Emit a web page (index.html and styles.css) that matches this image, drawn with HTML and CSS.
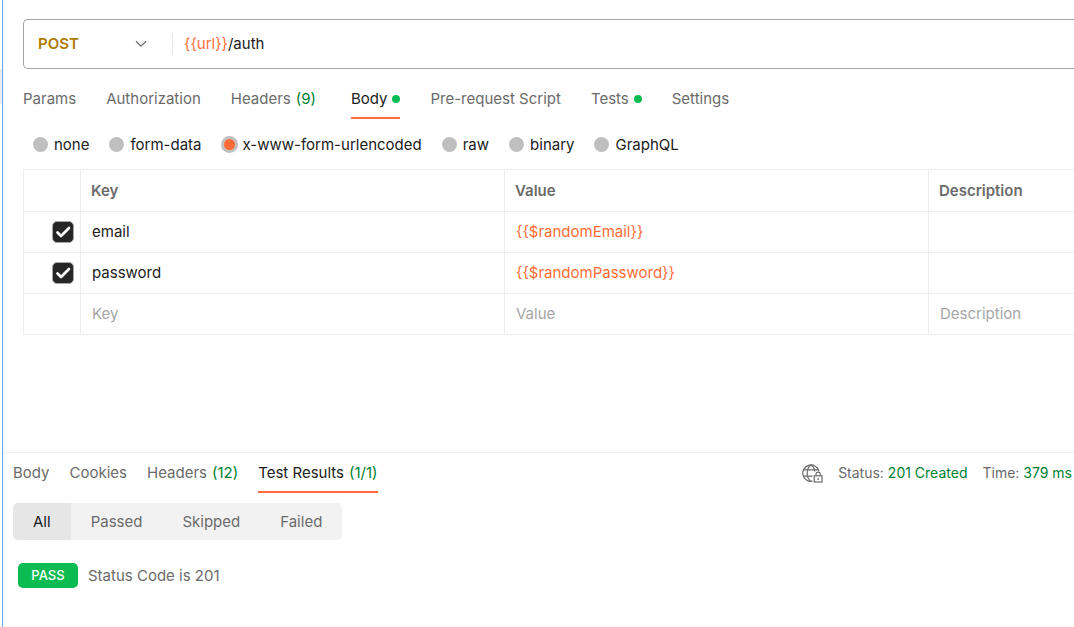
FILE: index.html
```
<!DOCTYPE html>
<html lang="en">
<head>
  <meta charset="UTF-8">
  <meta name="viewport" content="width=device-width, initial-scale=1.0">
  <title>POST {{url}}/auth</title>
  <link rel="stylesheet" href="styles.css">
</head>
<body>
  <div class="gutter"><div class="gutter-mark"></div></div>
  <main class="workspace">
    <section class="request">
      <div class="url-bar">
        <div class="method">
          <select aria-label="Method">
            <option>GET</option>
            <option selected>POST</option>
            <option>PUT</option>
            <option>DELETE</option>
          </select>
          <svg class="chevron" width="12" height="8" viewBox="0 0 12 8"><path d="M1 1.2l5 5 5-5" fill="none" stroke="#6b6b6b" stroke-width="1.3"/></svg>
        </div>
        <div class="url" role="textbox" contenteditable="true" spellcheck="false" aria-label="Request URL"><span class="variable">{{url}}</span>/auth</div>
      </div>

      <div class="tabs request-tabs" role="tablist">
        <button class="tab" role="tab">Params</button>
        <button class="tab" role="tab">Authorization</button>
        <button class="tab" role="tab">Headers <span class="count">(9)</span></button>
        <button class="tab active" role="tab" aria-selected="true">Body<span class="dot"></span></button>
        <button class="tab" role="tab">Pre-request Script</button>
        <button class="tab" role="tab">Tests<span class="dot"></span></button>
        <button class="tab" role="tab">Settings</button>
      </div>

      <div class="body-types">
        <label><input type="radio" name="body-type">none</label>
        <label><input type="radio" name="body-type">form-data</label>
        <label><input type="radio" name="body-type" checked>x-www-form-urlencoded</label>
        <label><input type="radio" name="body-type">raw</label>
        <label><input type="radio" name="body-type">binary</label>
        <label><input type="radio" name="body-type">GraphQL</label>
      </div>

      <table class="params">
        <thead>
          <tr>
            <th class="col-check"></th>
            <th class="col-field">Key</th>
            <th class="col-field">Value</th>
            <th>Description</th>
          </tr>
        </thead>
        <tbody>
          <tr>
            <td class="check"><input type="checkbox" aria-label="Enable email" checked></td>
            <td><input type="text" aria-label="Key" value="email"></td>
            <td><input type="text" class="variable" aria-label="Value" value="{{$randomEmail}}"></td>
            <td><input type="text" aria-label="Description"></td>
          </tr>
          <tr>
            <td class="check"><input type="checkbox" aria-label="Enable password" checked></td>
            <td><input type="text" aria-label="Key" value="password"></td>
            <td><input type="text" class="variable" aria-label="Value" value="{{$randomPassword}}"></td>
            <td><input type="text" aria-label="Description"></td>
          </tr>
          <tr>
            <td></td>
            <td><input type="text" aria-label="Key" placeholder="Key"></td>
            <td><input type="text" aria-label="Value" placeholder="Value"></td>
            <td><input type="text" aria-label="Description" placeholder="Description"></td>
          </tr>
        </tbody>
      </table>
    </section>

    <section class="response">
      <div class="response-header">
        <div class="tabs response-tabs" role="tablist">
          <button class="tab" role="tab">Body</button>
          <button class="tab" role="tab">Cookies</button>
          <button class="tab" role="tab">Headers <span class="count">(12)</span></button>
          <button class="tab active" role="tab" aria-selected="true">Test Results <span class="count">(1/1)</span></button>
        </div>
        <div class="status">
          <svg class="globe" width="21" height="19" viewBox="0 0 21 19" fill="none" stroke="#6b6b6b" stroke-width="1.2">
            <path d="M10.5 17.2A8.2 8.2 0 1 1 17 7.2"/>
            <path d="M9 17.4C3.9 14 3.9 4.5 9 1C11.4 2.6 12.6 5 12.8 7.5M1.6 5.8H16.4M1.6 12.2H10.5"/>
            <rect x="12.2" y="11.8" width="7.8" height="6.2"/>
            <path d="M14 11.8V10.3a2.1 2.1 0 0 1 4.2 0V11.8M16.1 13.8V16"/>
          </svg>
          <span>Status: <span class="count">201 Created</span></span>
          <span>Time: <span class="count">379 ms</span></span>
        </div>
      </div>

      <div class="filters">
        <button class="filter active">All</button>
        <button class="filter">Passed</button>
        <button class="filter">Skipped</button>
        <button class="filter">Failed</button>
      </div>

      <div class="result">
        <span class="badge">PASS</span>
        <span>Status Code is 201</span>
      </div>
    </section>
  </main>
</body>
</html>
```
FILE: styles.css
```
:root {
  --text: #212121;
  --muted: #6b6b6b;
  --placeholder: #a6a6a6;
  --line: #ededed;
  --accent: #ff6c37;
  --green: #0cbb52;
  --green-text: #007f31;
}

* {
  margin: 0;
  padding: 0;
  box-sizing: border-box;
}

body {
  display: flex;
  min-height: 100vh;
  font-family: Inter, sans-serif;
  font-size: 15px;
  line-height: 20px;
  color: var(--text);
  background-color: #fff;
  overflow-x: hidden;
}

button, input, select {
  font: inherit;
  color: inherit;
  background: none;
  border: none;
  outline: none;
}

.gutter {
  width: 2px;
  padding-top: 69px;
}

.gutter-mark {
  height: 35px;
  background-color: #ededed;
}

.workspace {
  flex: 1;
  min-width: 0;
  display: flex;
  flex-direction: column;
  border-left: 1px solid #6ba6f5;
}

.variable {
  color: var(--accent);
}

/* Request */
.request {
  padding: 19px 0 0 20px;
}

.url-bar {
  display: flex;
  align-items: center;
  height: 50px;
  border: 1px solid #a6a6a6;
  border-right: none;
  border-radius: 5px 0 0 5px;
}

.method {
  position: relative;
  width: 149px;
  border-right: 1px solid #e6e6e6;
}

.method select {
  display: block;
  width: 100%;
  height: 22px;
  padding-left: 14px;
  appearance: none;
  font-weight: 600;
  color: #ad7a03;
}

.chevron {
  position: absolute;
  right: 25px;
  top: 7px;
  pointer-events: none;
}

.url {
  flex: 1;
  padding-left: 11px;
  outline: none;
}

/* Tabs */
.tabs {
  display: flex;
}

.tab {
  display: flex;
  align-items: center;
  gap: 5px;
  color: var(--muted);
  border-bottom: 2px solid transparent;
  white-space: nowrap;
  cursor: pointer;
}

.tab.active {
  color: var(--text);
  border-bottom-color: var(--accent);
}

.request-tabs {
  gap: 30px;
  padding-top: 20px;
}

.request-tabs .tab {
  height: 30px;
  padding-bottom: 8px;
}

.request-tabs .count {
  margin-right: 5px;
}

.count {
  color: var(--green-text);
}

.dot {
  width: 8px;
  height: 8px;
  border-radius: 50%;
  background-color: var(--green);
}

/* Body type radios */
.body-types {
  display: flex;
  gap: 20px;
  padding: 16px 0 14px 10px;
}

.body-types label {
  display: flex;
  align-items: center;
  gap: 6px;
  white-space: nowrap;
}

.body-types input {
  appearance: none;
  width: 15px;
  height: 15px;
  margin-bottom: 2px;
  border-radius: 50%;
  background-color: #bfbfbf;
}

.body-types input:checked {
  width: 17px;
  height: 17px;
  margin-left: -1px;
  margin-right: -1px;
  background-color: var(--accent);
  border: 3px solid #bfbfbf;
}

/* Params table */
.params {
  width: 100%;
  table-layout: fixed;
  border-collapse: collapse;
}

.params th, .params td {
  height: 41px;
  border: 1px solid var(--line);
  text-align: left;
}

.params th:last-child, .params td:last-child {
  border-right: none;
}

.params th {
  height: 42px;
  padding-left: 10px;
  font-weight: 600;
  color: var(--muted);
}

.col-check {
  width: 57px;
}

.col-field {
  width: 424px;
}

.params input[type="text"] {
  display: block;
  width: 100%;
  height: 38px;
  padding: 0 11px 2px;
}

.params input::placeholder {
  color: var(--placeholder);
}

.params .check {
  padding-left: 28px;
}

.params input[type="checkbox"] {
  display: block;
  appearance: none;
  width: 22px;
  height: 22px;
  border: 1px solid #a6a6a6;
  border-radius: 5px;
}

.params input[type="checkbox"]:checked {
  background: #262626 url("data:image/svg+xml,%3Csvg xmlns='http://www.w3.org/2000/svg' viewBox='0 0 20 20'%3E%3Cpath d='M4.5 10.5l3.500 3.500 8-8' fill='none' stroke='white' stroke-width='2.700' stroke-linecap='round' stroke-linejoin='round'/%3E%3C/svg%3E") center / 20px 20px no-repeat;
}

/* Response */
.response {
  margin-top: 117px;
  border-top: 1px solid var(--line);
}

.response-header {
  display: flex;
  justify-content: space-between;
  padding: 10px 2px 0 10px;
}

.response-tabs {
  gap: 20px;
}

.response-tabs .tab {
  height: 30px;
  padding-bottom: 8px;
}

.status {
  display: flex;
  align-items: center;
  gap: 15px;
  height: 20px;
  font-size: 14px;
  color: var(--muted);
  white-space: nowrap;
}

.filters {
  display: inline-flex;
  margin: 10px 0 0 10px;
  border-radius: 5px;
  background-color: #f2f2f2;
  overflow: hidden;
}

.filter {
  height: 37px;
  padding: 0 20px;
  color: var(--muted);
  cursor: pointer;
}

.filter.active {
  color: var(--text);
  background-color: #e6e6e6;
}

.result {
  display: flex;
  align-items: center;
  gap: 10px;
  padding: 23px 15px;
  color: var(--muted);
}

.badge {
  width: 60px;
  border-radius: 5px;
  background-color: var(--green);
  color: #fff;
  font-size: 13px;
  font-weight: 500;
  line-height: 25px;
  text-align: center;
}
```
